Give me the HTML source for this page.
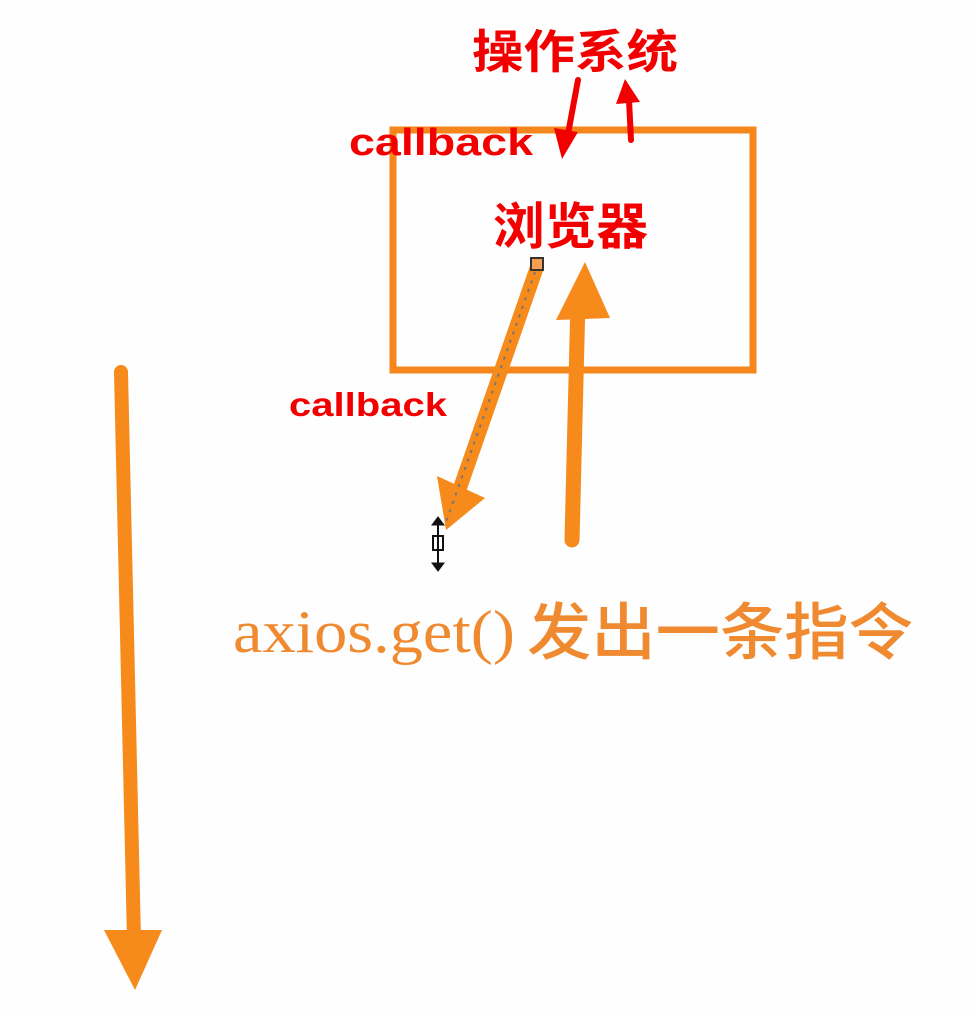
<!DOCTYPE html>
<html><head><meta charset="utf-8"><style>
html,body{margin:0;padding:0;background:#fff;width:972px;height:1016px;overflow:hidden}
svg{display:block}
.r{fill:#f20000;font-family:"Liberation Sans","Noto Sans CJK SC",sans-serif;font-weight:bold}
</style></head><body>
<svg width="972" height="1016" viewBox="0 0 972 1016" xmlns="http://www.w3.org/2000/svg">
<rect width="972" height="1016" fill="#fefefe"/>
<rect x="393" y="130" width="360" height="240" fill="none" stroke="#f4861c" stroke-width="7"/>
<text class="r" x="472" y="68" font-size="46" textLength="206" lengthAdjust="spacingAndGlyphs">操作系统</text>
<text class="r" x="349" y="155" font-size="38" textLength="184" lengthAdjust="spacingAndGlyphs">callback</text>
<text class="r" x="493" y="244" font-size="50" textLength="155" lengthAdjust="spacingAndGlyphs">浏览器</text>
<text class="r" x="289" y="416" font-size="33" textLength="158" lengthAdjust="spacingAndGlyphs">callback</text>
<line x1="578" y1="80" x2="568" y2="134" stroke="#f20000" stroke-width="6" stroke-linecap="round"/>
<polygon points="554,128 578,132 562,159" fill="#f20000"/>
<line x1="631" y1="140" x2="629" y2="100" stroke="#f20000" stroke-width="6" stroke-linecap="round"/>
<polygon points="616,104 640,102 625,79" fill="#f20000"/>
<line x1="537" y1="267" x2="460" y2="488" stroke="#f68a1a" stroke-width="14"/>
<polygon points="437,476 485,498 446,530" fill="#f68a1a"/>
<line x1="535" y1="272" x2="446" y2="522" stroke="#777" stroke-width="2" stroke-dasharray="3,6"/>
<rect x="531" y="258" width="12" height="12" fill="#f4a050" stroke="#333" stroke-width="2"/>
<g stroke="#111" fill="#111">
<line x1="438" y1="522" x2="438" y2="566" stroke-width="2"/>
<polygon points="432,525 444,525 438,517"/>
<polygon points="432,563 444,563 438,571"/>
<rect x="433" y="536" width="10" height="14" fill="none" stroke-width="2"/>
</g>
<line x1="572" y1="540" x2="578" y2="300" stroke="#f68a1a" stroke-width="15" stroke-linecap="round"/>
<polygon points="556,320 610,318 585,262" fill="#f68a1a"/>
<line x1="121" y1="372" x2="134" y2="940" stroke="#f68a1a" stroke-width="14" stroke-linecap="round"/>
<polygon points="104,930 162,930 135,990" fill="#f68a1a"/>
<text x="233" y="652" font-family="Liberation Serif,serif" font-size="60" fill="#f08a30" textLength="282" lengthAdjust="spacingAndGlyphs">axios.get()</text>
<text x="527" y="654" font-family="'Liberation Sans','Noto Sans CJK SC',sans-serif" font-size="62" font-weight="500" fill="#f08a30" textLength="386" lengthAdjust="spacingAndGlyphs">发出一条指令</text>
</svg>
</body></html>
